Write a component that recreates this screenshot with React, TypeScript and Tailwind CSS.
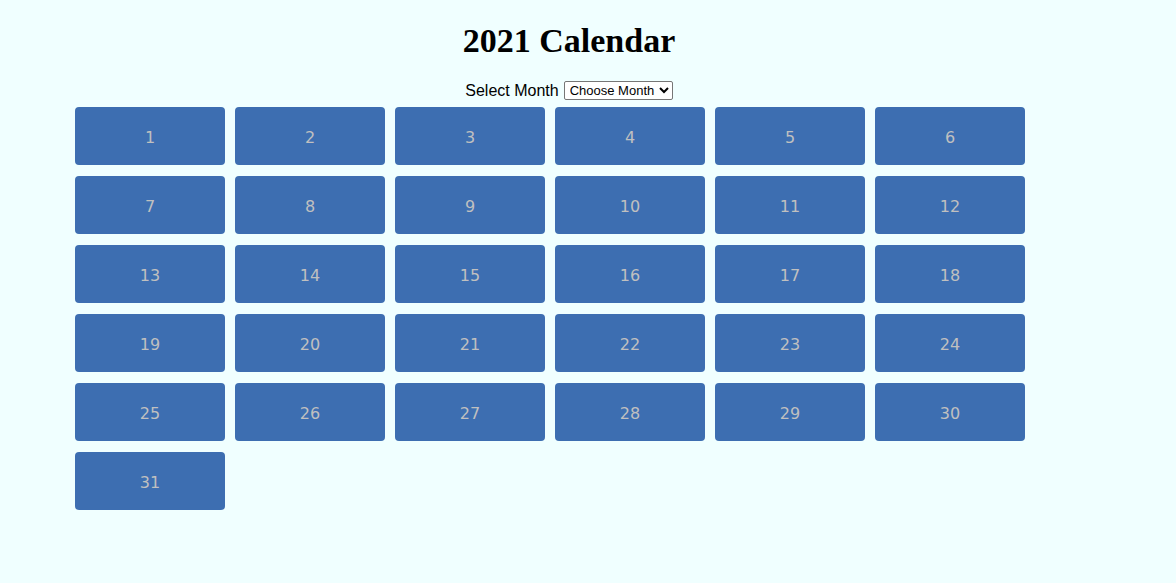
const days = Array.from({ length: 31 }, (_, i) => i + 1)

export default function App() {
  return (
    <div className="min-h-[583px] w-full bg-[#f0ffff]">
      <div className="w-[1138px] pt-[21px] text-center">
        <h1 className="font-['Liberation_Serif',serif] text-[34px] leading-[39px] font-bold text-black">
          2021 Calendar
        </h1>
        <div className="mt-[21px] flex items-center justify-center gap-[5px] font-['Liberation_Sans',Arial,sans-serif] text-[16px] leading-[18px] text-black">
          <span>Select Month</span>
          <select className="h-[19px] rounded-[2px] border border-[#767676] bg-white px-[1px] font-['Liberation_Sans',Arial,sans-serif] text-[13px] leading-[15px] text-black">
            <option>Choose Month</option>
          </select>
        </div>
      </div>
      <div className="mt-[7px] grid w-fit grid-cols-[repeat(6,150px)] gap-x-[10px] gap-y-[11px] pl-[75px]">
        {days.map(d => (
          <div
            key={d}
            className="flex h-[58px] items-center justify-center rounded-[4px] bg-[#3d6eb1] pt-[3px] font-['DejaVu_Sans',Verdana,sans-serif] text-[16px] text-[#c0c0c0]"
          >
            {d}
          </div>
        ))}
      </div>
    </div>
  )
}
